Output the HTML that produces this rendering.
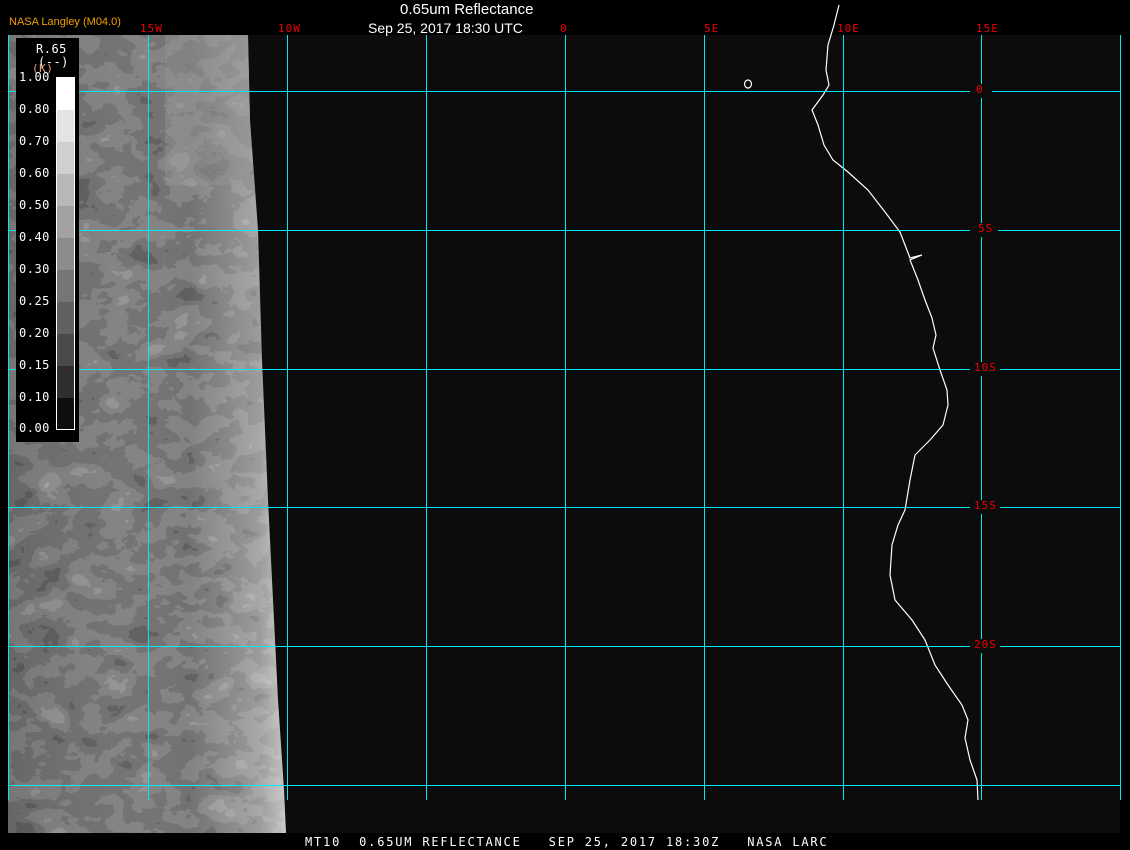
<!DOCTYPE html>
<html><head><meta charset="utf-8"><style>
body{margin:0;background:#000;width:1130px;height:850px;overflow:hidden;position:relative;font-family:"DejaVu Sans Mono","Liberation Mono",monospace}
.t{position:absolute;white-space:pre}
.v,.h{position:absolute;background:#00e8f0}
.v{width:1px;top:35px;height:765px}
.h{height:1px}
</style></head><body>
<svg width="1130" height="850" style="position:absolute;left:0;top:0">
<defs>
<filter id="n" x="0" y="0" width="100%" height="100%">
<feTurbulence type="fractalNoise" baseFrequency="0.03 0.045" numOctaves="4" seed="7"/>
<feColorMatrix type="matrix" values="0.33 0.33 0.33 0 0  0.33 0.33 0.33 0 0  0.33 0.33 0.33 0 0  0 0 0 0 1"/>
<feComponentTransfer><feFuncR type="discrete" tableValues="0.05 0.08 0.12 0.17 0.23 0.3 0.4 0.5"/><feFuncG type="discrete" tableValues="0.05 0.08 0.12 0.17 0.23 0.3 0.4 0.5"/><feFuncB type="discrete" tableValues="0.05 0.08 0.12 0.17 0.23 0.3 0.4 0.5"/></feComponentTransfer>
</filter>
<linearGradient id="g" x1="0" y1="0" x2="1" y2="0"><stop offset="0" stop-color="#000" stop-opacity="0.1"/><stop offset="0.65" stop-color="#fff" stop-opacity="0"/><stop offset="0.9" stop-color="#fff" stop-opacity="0.3"/><stop offset="1" stop-color="#fff" stop-opacity="0.6"/></linearGradient>
<clipPath id="c"><path d="M8 35 L248 35 L250 120 L258 230 L262 360 L268 500 L273 600 L278 700 L284 790 L286 833 L8 833Z"/></clipPath>
</defs>
<rect x="8" y="35" width="1112" height="798" fill="#0c0c0c"/>
<g clip-path="url(#c)">
<rect x="8" y="35" width="280" height="798" filter="url(#n)"/>
<rect x="8" y="35" width="280" height="798" fill="url(#g)"/>
<rect x="165" y="35" width="85" height="150" fill="#999" opacity="0.4"/>
</g>
<polyline fill="none" stroke="#fff" stroke-width="1.2" points="839,5 834,25 828,45 826,70 829,85 823,95 812,110 818,125 824,145 833,160 848,172 868,190 885,212 900,232 905,245 910,258 922,255 910,260 918,280 925,300 932,318 936,335 933,348 940,370 947,390 948,405 943,425 930,440 915,455 910,480 905,510 898,525 892,545 890,575 895,600 912,620 925,640 935,665 948,685 962,705 968,720 965,738 970,760 977,780 978,800"/>
<ellipse cx="748" cy="84" rx="3.5" ry="4" fill="none" stroke="#fff" stroke-width="1.2"/>
</svg>
<div class="v" style="left:8px"></div><div class="v" style="left:148px"></div><div class="v" style="left:287px"></div><div class="v" style="left:426px"></div><div class="v" style="left:565px"></div><div class="v" style="left:704px"></div><div class="v" style="left:843px"></div><div class="v" style="left:981px"></div><div class="v" style="left:1120px"></div>
<div class="h" style="left:8px;width:1112px;top:91px"></div><div class="h" style="left:8px;width:1112px;top:230px"></div><div class="h" style="left:8px;width:1112px;top:369px"></div><div class="h" style="left:8px;width:1112px;top:507px"></div><div class="h" style="left:8px;width:1112px;top:646px"></div><div class="h" style="left:8px;width:1112px;top:785px"></div>
<div style="position:absolute;left:970px;top:84px;width:22px;height:14px;background:#0c0c0c"></div>
<div style="position:absolute;left:970px;top:223px;width:28px;height:14px;background:#0c0c0c"></div>
<div style="position:absolute;left:970px;top:362px;width:30px;height:14px;background:#0c0c0c"></div>
<div style="position:absolute;left:970px;top:500px;width:30px;height:14px;background:#0c0c0c"></div>
<div style="position:absolute;left:970px;top:639px;width:30px;height:14px;background:#0c0c0c"></div>
<svg width="1130" height="850" style="position:absolute;left:0;top:0">
<rect x="16" y="38" width="63" height="404" fill="#000"/>
<g shape-rendering="crispEdges">
<rect x="56" y="77" width="19" height="33" fill="#fff"/>
<rect x="56" y="110" width="19" height="32" fill="#e4e4e4"/>
<rect x="56" y="142" width="19" height="32" fill="#cfcfcf"/>
<rect x="56" y="174" width="19" height="32" fill="#b8b8b8"/>
<rect x="56" y="206" width="19" height="32" fill="#a2a2a2"/>
<rect x="56" y="238" width="19" height="32" fill="#8c8c8c"/>
<rect x="56" y="270" width="19" height="32" fill="#767676"/>
<rect x="56" y="302" width="19" height="32" fill="#616161"/>
<rect x="56" y="334" width="19" height="32" fill="#4a4a4a"/>
<rect x="56" y="366" width="19" height="32" fill="#2e2e2e"/>
<rect x="56" y="398" width="19" height="32" fill="#0e0e0e"/>
<rect x="56.5" y="77.5" width="18" height="352" fill="none" stroke="#fff"/>
</g>
</svg>
<div class="t" style="left:9px;top:16px;font:11px 'Liberation Sans',sans-serif;color:#f0a000">NASA Langley (M04.0)</div>
<div class="t" style="left:400px;top:1px;font:15px 'Liberation Sans',sans-serif;color:#fff">0.65um Reflectance</div>
<div class="t" style="left:368px;top:20px;font:14px 'Liberation Sans',sans-serif;color:#fff">Sep 25, 2017 18:30 UTC</div>
<div style="color:#e00;font-size:11px;letter-spacing:1px">
<div class="t" style="left:140px;top:22px">15W</div><div class="t" style="left:278px;top:22px">10W</div><div class="t" style="left:560px;top:22px">0</div><div class="t" style="left:704px;top:22px">5E</div><div class="t" style="left:837px;top:22px">10E</div><div class="t" style="left:976px;top:22px">15E</div>
<div class="t" style="left:976px;top:83px">0</div><div class="t" style="left:978px;top:222px">5S</div><div class="t" style="left:974px;top:361px">10S</div><div class="t" style="left:974px;top:499px">15S</div><div class="t" style="left:974px;top:638px">20S</div>
</div>
<div style="color:#fff;font-size:12px;letter-spacing:0.5px">
<div class="t" style="left:36px;top:42px">R.65</div><div class="t" style="left:38px;top:55px">(--)</div>
<div class="t" style="left:32px;top:62px;color:#f0a080;font-size:11px">(K)</div>
<div class="t" style="left:19px;top:70px">1.00</div><div class="t" style="left:19px;top:102px">0.80</div><div class="t" style="left:19px;top:134px">0.70</div><div class="t" style="left:19px;top:166px">0.60</div><div class="t" style="left:19px;top:198px">0.50</div><div class="t" style="left:19px;top:230px">0.40</div><div class="t" style="left:19px;top:262px">0.30</div><div class="t" style="left:19px;top:294px">0.25</div><div class="t" style="left:19px;top:326px">0.20</div><div class="t" style="left:19px;top:358px">0.15</div><div class="t" style="left:19px;top:390px">0.10</div><div class="t" style="left:19px;top:421px">0.00</div>
</div>
<div class="t" style="left:305px;top:835px;color:#fff;font-size:12px;letter-spacing:1.8px">MT10  0.65UM REFLECTANCE   SEP 25, 2017 18:30Z   NASA LARC</div>
</body></html>
